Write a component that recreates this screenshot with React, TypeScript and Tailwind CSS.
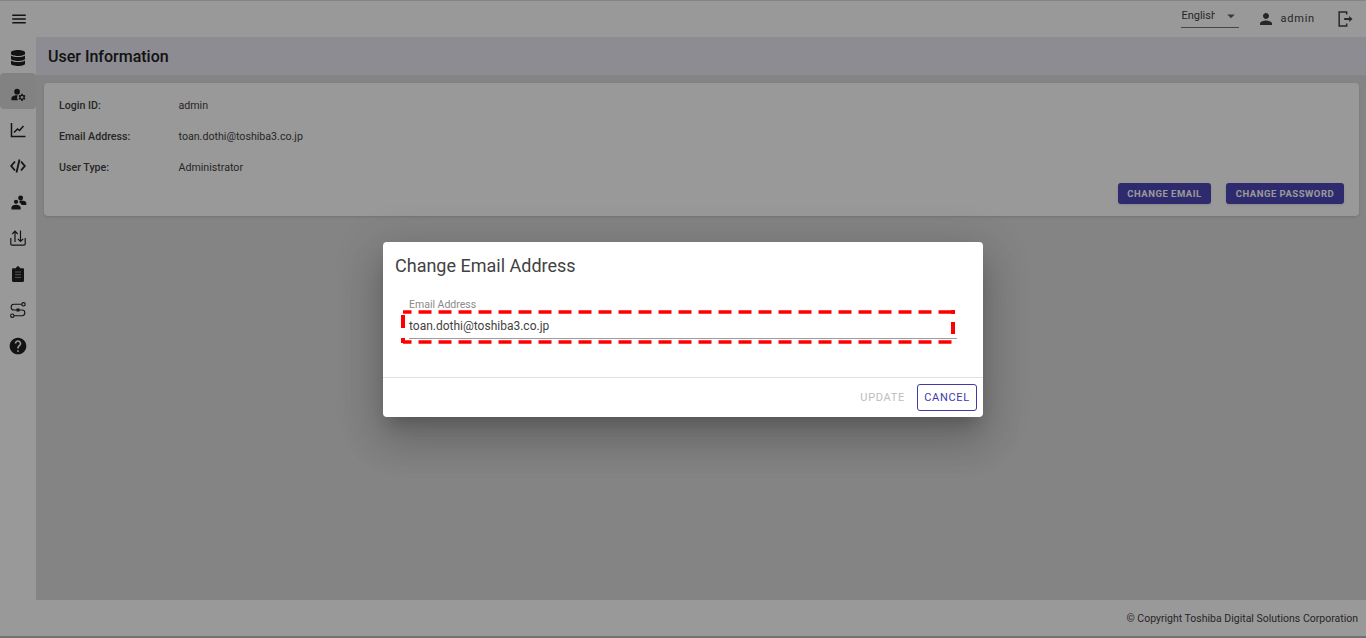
import React from "react";
import { MdManageAccounts, MdHelp, MdPerson, MdMenu, MdArrowDropDown } from "react-icons/md";
import { FaDatabase } from "react-icons/fa";

const Chart = () => (
  <svg viewBox="0 0 16 16" width="16" height="16" fill="none" stroke="#212121" strokeWidth="1.500"><path d="M1.500 1v13.500h14" /><path d="M4 10.500l3.500-3.500 2 1.500 4-4.500" /></svg>
);
const Code = () => (
  <svg viewBox="0 0 16 14" width="16" height="14" fill="none" stroke="#212121" strokeWidth="1.800"><path d="M5 2.500L1.200 7 5 11.500" /><path d="M11 2.500L14.800 7 11 11.500" /><path d="M9.500 .5L6.500 13.500" /></svg>
);
const Team = () => (
  <svg viewBox="0 0 24 24" width="17" height="17" fill="#212121"><circle cx="15" cy="5.500" r="3.500" /><circle cx="8.500" cy="11" r="3" /><path d="M2 22v-3c0-2.500 3-4 6.500-4s6.500 1.500 6.500 4v3z" /><path d="M13 11.500c.6-1 .7-1.600.6-2.300 3.500-.5 9.400.6 9.400 3.300v3h-6.500c-.4-1.500-2.200-3.100-3.500-4z" /></svg>
);
const Transfer = () => (
  <svg viewBox="0 0 16 16" width="16" height="16" fill="none" stroke="#212121" strokeWidth="1.200"><path d="M5 12V1.200M2.300 4L5 1.200 7.700 4" /><path d="M10.500 .5v11M7.800 8.800l2.700 2.700 2.700-2.700" /><path d="M.8 8v6c0 .7.500 1.200 1.200 1.200h12c.7 0 1.200-.5 1.200-1.200V8" /></svg>
);
const Clipboard = () => (
  <svg viewBox="0 0 12 16" width="12" height="16"><path d="M4 1.200h1C5.200 .4 5.500 0 6 0s.8.400 1 1.200h1v1h2.800c.7 0 1.200.5 1.200 1.200v11.400c0 .7-.5 1.200-1.200 1.200H1.200C.5 16 0 15.500 0 14.800V3.400c0-.7.500-1.200 1.200-1.200H4z" fill="#212121" /><path d="M3 6h6M3 8.700h6M3 11.400h6" stroke="#8a8a8a" strokeWidth="1" /></svg>
);
const RouteIcon = () => (
  <svg viewBox="0 0 16 16" width="16" height="16" fill="none" stroke="#212121" strokeWidth="1.100"><circle cx="13.500" cy="2.300" r="1.700" /><circle cx="2.300" cy="13.700" r="1.700" /><path d="M11.800 2.300H4a2.800 2.800 0 0 0 0 5.700h8a2.800 2.800 0 0 1 0 5.700H4" /><rect x="6.500" y="6.500" width="3" height="3" fill="#212121" stroke="none" /></svg>
);
const Logout = () => (
  <svg viewBox="0 0 24 24" width="20" height="20" fill="none" stroke="#424242" strokeWidth="1.800"><path d="M14 6.500V3.500H5v17h9v-3" /><path d="M11 12h8" strokeWidth="2.400" /><path d="M17 8.500l4 3.500-4 3.500z" fill="#424242" stroke="none" /></svg>
);

const nav = [<FaDatabase size={16} color="#212121" />, <MdManageAccounts size={17} color="#212121" />, <Chart />, <Code />, <Team />, <Transfer />, <Clipboard />, <RouteIcon />, <MdHelp size={20} color="#212121" />];

const Row = ({ label, value }: { label: string; value: string }) => (
  <div className="flex h-[31px] items-center text-[10.650px] text-[#424242]">
    <div className="w-[119.500px] font-medium">{label}</div>
    <div>{value}</div>
  </div>
);

export default function App() {
  return (
    <div className="relative flex h-[638px] w-[1366px] flex-col overflow-hidden bg-[#dcdcdc] font-['Roboto',sans-serif]">
      <header className="flex h-[37px] shrink-0 items-center border-t border-[#dcdcdc] bg-white pl-[10px] pr-[11px]">
        <MdMenu size={18} color="#212121" />
        <div className="ml-auto flex h-[27px] w-[58px] items-start justify-between self-start border-b border-[#757575] pt-[7px] text-[11px] leading-[16px] text-[#424242]">
          <span className="w-[34px] overflow-hidden">English</span>
          <MdArrowDropDown size={18} color="#616161" className="-mr-[1px] -mt-[1px]" />
        </div>
        <MdPerson size={18} color="#424242" className="ml-[18px]" />
        <span className="ml-[5px] text-[11px] tracking-[0.8px] text-[#424242]">admin</span>
        <div className="ml-[20px]"><Logout /></div>
      </header>
      <div className="flex min-h-0 flex-1">
        <nav className="flex w-[36px] shrink-0 flex-col bg-white">
          {nav.map((n, i) => (
            <div key={i} className={`flex h-[36px] shrink-0 items-center justify-center pt-[6px] ${i === 1 ? "rounded-[4px] bg-[#d9d9d9]" : ""}`}>{n}</div>
          ))}
        </nav>
        <div className="flex min-w-0 flex-1 flex-col">
          <div className="flex h-[38px] shrink-0 items-center bg-[#e9e9f3] pl-[12px] pt-[2px] text-[16px] font-medium text-[#212121]">User Information</div>
          <main className="min-h-0 flex-1 pl-[8px] pr-[7px] pt-[8px]">
            <section className="h-[133px] rounded-[4px] bg-white pl-[15px] pr-[15px] pt-[7px] shadow-sm">
              <Row label="Login ID:" value="admin" />
              <Row label="Email Address:" value="toan.dothi@toshiba3.co.jp" />
              <Row label="User Type:" value="Administrator" />
              <div className="flex justify-end gap-[15px]">
                <button className="h-[21px] w-[93px] rounded-[3px] bg-[#4d46b8] pt-[1px] text-[9.500px] font-bold tracking-[0.5px] text-white shadow">CHANGE EMAIL</button>
                <button className="h-[21px] w-[118px] rounded-[3px] bg-[#4d46b8] pt-[1px] text-[9.500px] font-bold tracking-[0.5px] text-white shadow">CHANGE PASSWORD</button>
              </div>
            </section>
          </main>
          <footer className="flex h-[36px] shrink-0 items-center justify-end bg-white pr-[8px] pt-[1px] text-[10.500px] text-[#424242]">© Copyright Toshiba Digital Solutions Corporation</footer>
        </div>
      </div>
      <div className="h-[2px] shrink-0 bg-[#bdbdbd]" />

      <div className="absolute inset-0 flex justify-center bg-black/40 pt-[242px]">
        <div className="h-[175px] w-[600px] rounded-[4px] bg-white shadow-[0_11px_15px_-7px_rgba(0,0,0,0.2),0_24px_38px_3px_rgba(0,0,0,0.14),0_9px_46px_8px_rgba(0,0,0,0.12)]">
          <h2 className="px-[12px] pt-[12px] text-[18px] leading-[24px] text-[#424242]">Change Email Address</h2>
          <div className="relative mx-[26px] mt-[21px] h-[40px]">
            <div className="text-[10.500px] leading-[12px] text-[#8a8a8a]">Email Address</div>
            <div className="mt-[6px] h-[22px] border-b border-[#9e9e9e] text-[12px] leading-[18px] text-[#424242]">toan.dothi@toshiba3.co.jp</div>
            <svg className="absolute left-[-6.500px] top-[11px] overflow-visible" width="552" height="36" fill="none" stroke="#ff0000">
              <line x1="0" y1="2" x2="551" y2="2" strokeWidth="3.500" strokeDasharray="13 7" strokeDashoffset="4.500" />
              <line x1="0" y1="32" x2="551" y2="32" strokeWidth="3.500" strokeDasharray="13 7" strokeDashoffset="4.500" />
              <line x1="0" y1="0" x2="0" y2="34" strokeWidth="4" strokeDasharray="0 5 13 10 5 100" />
              <line x1="550" y1="0" x2="550" y2="34" strokeWidth="4" strokeDasharray="4 8 12 100" />
            </svg>
          </div>
          <div className="mt-[38px] flex h-[40px] items-center justify-end gap-[12px] border-t border-[#e0e0e0] pr-[6px]">
            <button className="pt-[1px] text-[11px] tracking-[0.7px] text-[#bdbdbd]">UPDATE</button>
            <button className="h-[27px] w-[60px] rounded-[3px] border border-[#3f3aa8] pt-[1px] text-[11px] tracking-[0.7px] text-[#3f3aa8]">CANCEL</button>
          </div>
        </div>
      </div>
    </div>
  );
}
